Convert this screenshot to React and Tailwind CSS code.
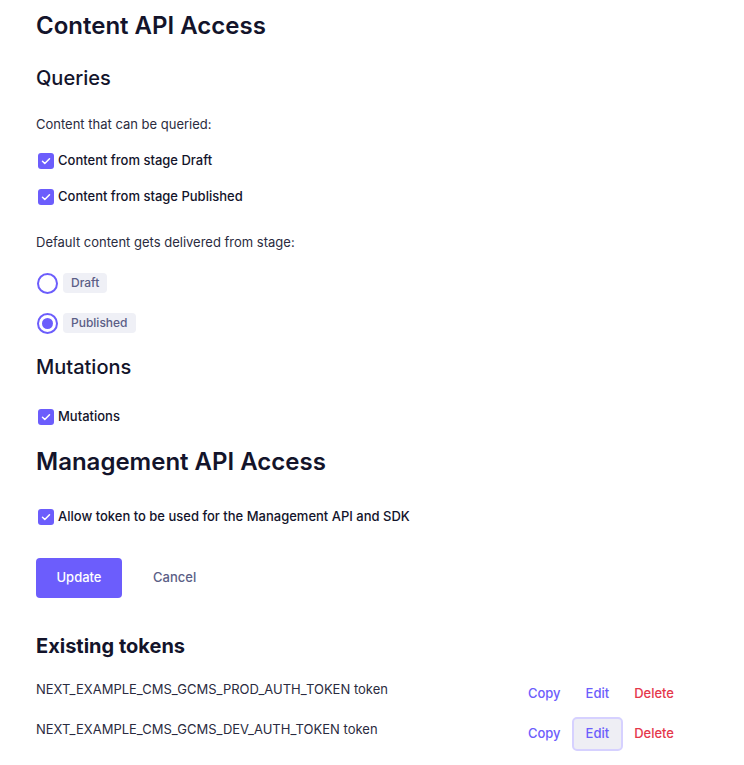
import React, { useState } from "react";

function Check({ label, checked, onChange }) {
  return (
    <label className="flex items-center gap-[4px] h-[20px] cursor-pointer">
      <span
        onClick={onChange}
        className={`w-[16px] h-[16px] ml-[2px] rounded-[3px] flex items-center justify-center ${checked ? "bg-[#6c5dfc]" : "border border-[#c7c8d8] bg-white"}`}
      >
        {checked && (
          <svg width="12" height="12" viewBox="0 0 12 12" fill="none">
            <path d="M2.5 6.2l2.3 2.3 4.7-4.8" stroke="white" strokeWidth="1.5" strokeLinecap="round" strokeLinejoin="round" />
          </svg>
        )}
      </span>
      <span className="text-[13px] font-medium text-[#13142b]">{label}</span>
    </label>
  );
}

function Radio({ label, checked, onChange }) {
  return (
    <div onClick={onChange} className="flex items-center gap-[5px] h-[20px] cursor-pointer">
      <span className="w-[21px] h-[21px] ml-[1px] rounded-full border-2 border-[#6c5dfc] flex items-center justify-center bg-white">
        {checked && <span className="w-[11px] h-[11px] rounded-full bg-[#6c5dfc]" />}
      </span>
      <span className="px-[8px] h-[20px] flex items-center rounded-[4px] bg-[#eff0f6] text-[12px] font-medium text-[#5b5e86]">
        {label}
      </span>
    </div>
  );
}

export default function App() {
  const [draft, setDraft] = useState(true);
  const [published, setPublished] = useState(true);
  const [stage, setStage] = useState("Published");
  const [mutations, setMutations] = useState(true);
  const [mgmt, setMgmt] = useState(true);

  const tokens = [
    "NEXT_EXAMPLE_CMS_GCMS_PROD_AUTH_TOKEN token",
    "NEXT_EXAMPLE_CMS_GCMS_DEV_AUTH_TOKEN token",
  ];

  return (
    <div className="w-[744px] h-[765px] bg-white px-[36px] pt-[11px] text-[#13142b] font-['Inter','Noto_Sans',sans-serif]">
      <h1 className="text-[24px] font-semibold leading-[30px]">Content API Access</h1>

      <h2 className="mt-[24px] text-[20px] font-medium leading-[26px]">Queries</h2>
      <p className="mt-[25px] text-[13px] leading-[16px] text-[#2a2b40]">Content that can be queried:</p>
      <div className="mt-[19px] flex flex-col gap-[16px]">
        <Check label="Content from stage Draft" checked={draft} onChange={() => setDraft(!draft)} />
        <Check label="Content from stage Published" checked={published} onChange={() => setPublished(!published)} />
      </div>

      <p className="mt-[27px] text-[13px] leading-[16px] text-[#2a2b40]">Default content gets delivered from stage:</p>
      <div className="mt-[23px] flex flex-col gap-[20px]">
        <Radio label="Draft" checked={stage === "Draft"} onChange={() => setStage("Draft")} />
        <Radio label="Published" checked={stage === "Published"} onChange={() => setStage("Published")} />
      </div>

      <h2 className="mt-[21px] text-[20px] font-medium leading-[26px]">Mutations</h2>
      <div className="mt-[27px]">
        <Check label="Mutations" checked={mutations} onChange={() => setMutations(!mutations)} />
      </div>

      <h1 className="mt-[20px] text-[24px] font-semibold leading-[30px]">Management API Access</h1>
      <div className="mt-[30px]">
        <Check label="Allow token to be used for the Management API and SDK" checked={mgmt} onChange={() => setMgmt(!mgmt)} />
      </div>

      <div className="mt-[31px] flex items-center gap-[8px]">
        <button className="w-[86px] h-[40px] rounded-[4px] bg-[#6c5dfc] text-white text-[13px] font-medium">Update</button>
        <button className="px-[23px] h-[40px] text-[13px] font-medium text-[#5b5e86]">Cancel</button>
      </div>

      <h2 className="mt-[35px] text-[20px] font-bold leading-[26px]">Existing tokens</h2>
      <div className="mt-[15px] flex flex-col gap-[8px]">
        {tokens.map((t, i) => (
          <div key={t} className="flex items-center justify-between h-[32px]">
            <span className="text-[13px] text-[#2a2b40]">{t}</span>
            <div className="flex items-center gap-[7px] mr-[30px] mt-[7px] text-[13px] font-medium">
              <button className="px-[4px] h-[32px] text-[#6c5dfc]">Copy</button>
              <button className={`px-[12px] h-[34px] rounded-[5px] text-[#6c5dfc] ${i === 1 ? "bg-[#eeeef4] border-2 border-[#d6d1ff]" : "border-2 border-transparent"}`}>Edit</button>
              <button className="px-[4px] h-[32px] text-[#e5374a]">Delete</button>
            </div>
          </div>
        ))}
      </div>
    </div>
  );
}
